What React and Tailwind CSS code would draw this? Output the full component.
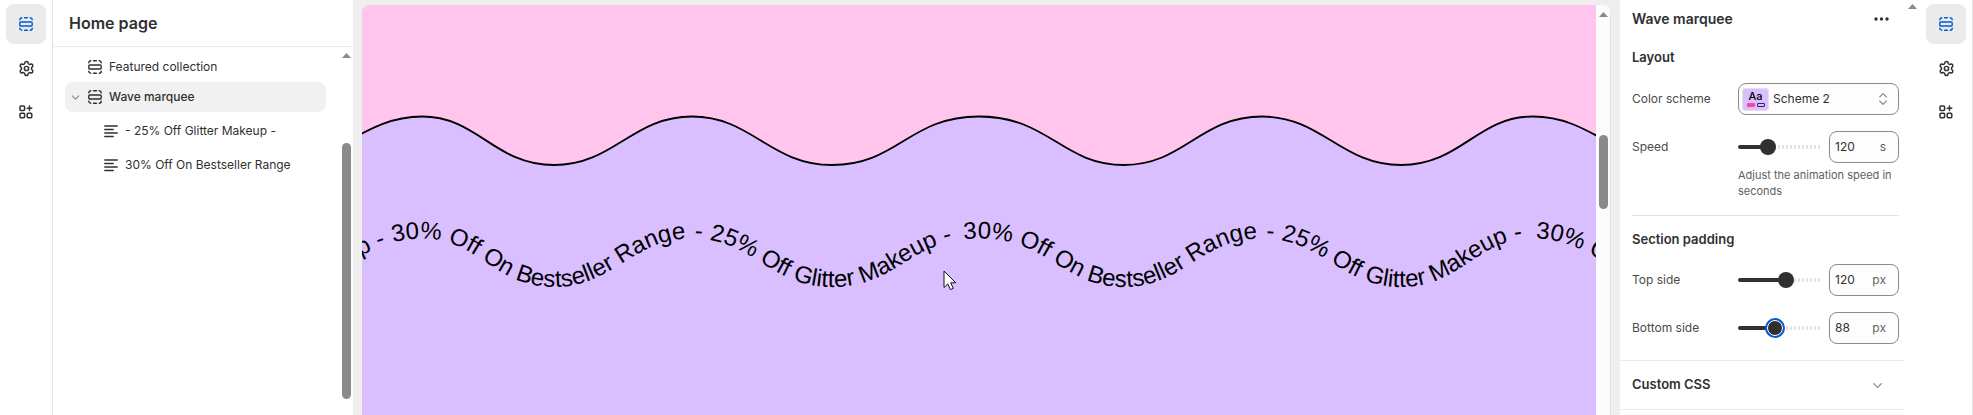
import { ChevronDown, ChevronsUpDown, Settings } from "lucide-react";

function SectionIcon() {
  return (
    <svg viewBox="0 0 14 14" className="size-3.5 shrink-0" fill="none" stroke="currentColor" strokeWidth="1.4" strokeLinecap="round" aria-hidden="true">
      <rect x="0.8" y="5" width="12.4" height="4" rx="1" />
      <path d="M.8 2.8a2 2 0 0 1 2-2M5.6.8h2.8M11.2.8a2 2 0 0 1 2 2M.8 11.2a2 2 0 0 0 2 2M5.6 13.2h2.8M11.2 13.2a2 2 0 0 0 2-2" />
    </svg>
  );
}

function AppsIcon() {
  return (
    <svg viewBox="0 0 14 14" className="size-3.5" fill="none" stroke="currentColor" strokeWidth="1.5" strokeLinecap="round" aria-hidden="true">
      <rect x="1" y="1" width="4.6" height="4.6" rx="1" />
      <rect x="1" y="8.2" width="4.6" height="4.6" rx="1" />
      <rect x="8.2" y="8.2" width="4.6" height="4.6" rx="1" />
      <path d="M10.5 1v4.6M8.2 3.3h4.6" />
    </svg>
  );
}

function TextIcon() {
  return (
    <svg viewBox="0 0 14 14" className="size-3.5 shrink-0" fill="none" stroke="currentColor" strokeWidth="1.4" strokeLinecap="round" aria-hidden="true">
      <path d="M.8 2h12.4M.8 5.500h8.4M.8 9h12.4M.8 12.500h8.4" />
    </svg>
  );
}

function Rail({ label, className }) {
  return (
    <nav aria-label={label} className={className}>
      <button aria-label="Sections" className="flex size-10 items-center justify-center rounded-lg bg-[#ebebeb] text-[#005bd3]">
        <SectionIcon />
      </button>
      <button aria-label="Theme settings" className="flex size-10 items-center justify-center">
        <Settings size={17} strokeWidth={2.1} />
      </button>
      <button aria-label="App embeds" className="flex size-10 items-center justify-center">
        <AppsIcon />
      </button>
    </nav>
  );
}

function UpArrow() {
  return (
    <svg viewBox="0 0 9 5" className="h-[5px] w-[9px]" fill="#8a8a8a" aria-hidden="true">
      <path d="M4.5 0 9 5H0z" />
    </svg>
  );
}

function Sidebar() {
  return (
    <aside className="flex w-[300px] shrink-0 flex-col bg-white">
      <header className="flex h-[47px] shrink-0 items-center border-b border-[#ebebeb] px-4">
        <h1 className="text-base font-semibold">Home page</h1>
      </header>
      <div className="flex min-h-0 flex-1">
        <ul className="flex-1 pt-[5px] pr-4 pl-3">
          <li>
            <a href="#featured" className="flex h-[30px] items-center gap-[7px] pl-[23px]">
              <SectionIcon />
              Featured collection
            </a>
          </li>
          <li>
            <a href="#wave" className="flex h-[30px] items-center gap-[7px] rounded-lg bg-[#f1f1f1] pl-[5px] font-medium">
              <span className="flex w-[11px] justify-center">
                <ChevronDown size={13} className="shrink-0 text-[#8a8a8a]" />
              </span>
              <SectionIcon />
              Wave marquee
            </a>
            <ul className="pt-0.5">
              <li>
                <a href="#glitter" className="flex h-[34px] items-center gap-[7px] pl-[39px]">
                  <TextIcon />
                  - 25% Off Glitter Makeup -
                </a>
              </li>
              <li>
                <a href="#bestseller" className="flex h-[34px] items-center gap-[7px] pl-[39px]">
                  <TextIcon />
                  30% Off On Bestseller Range
                </a>
              </li>
            </ul>
          </li>
        </ul>
        <div className="flex w-[11px] flex-col pt-1.5 pb-4" aria-hidden="true">
          <UpArrow />
          <div className="mt-[85px] w-[9px] flex-1 rounded-full bg-[#8a8a8a]" />
        </div>
      </div>
    </aside>
  );
}

const WAVE =
  "M-372 160C-312 160-287 111.5-227 111.5S-147 160-87 160C-27 160 0 111.5 60 111.5C116 111.5 132 160 192 160C252 160 270 111.5 330 111.5C390 111.5 408 160 470 160C536 160 547 111.5 617 111.5C687 111.5 700 160 762 160C822 160 838 111.5 900 111.5C960 111.5 979 160 1039 160C1099 160 1115 111.5 1171 111.5C1231 111.5 1256 160 1318 160S1405 111.5 1465 111.5";

const GLITTER = "- 25% Off Glitter Makeup -";
const BESTSELLER = "30% Off On Bestseller Range";
const PHRASES = [
  { text: GLITTER, at: 147 },
  { text: BESTSELLER, at: 433 },
  { text: GLITTER, at: 756 },
  { text: BESTSELLER, at: 1046 },
  { text: GLITTER, at: 1369 },
  { text: BESTSELLER, at: 1660 },
];

function Preview() {
  return (
    <main className="flex min-w-0 flex-1 overflow-hidden rounded-t-lg bg-[#fcfcfc]">
      <div className="min-w-0 flex-1 bg-[#d9bfff]">
        <svg viewBox="0 0 1234 410" preserveAspectRatio="xMidYMin slice" className="h-full w-full" role="img" aria-label="Wave marquee preview">
          <defs>
            <path id="marquee-line" d={WAVE} transform="translate(0 122)" />
          </defs>
          <path d={`${WAVE}V-10H-372Z`} fill="#ffc5ed" />
          <path d={WAVE} fill="none" stroke="#000" strokeWidth="1.8" />
          {PHRASES.map(({ text, at }) => (
            <text key={at} className="font-['Liberation_Sans',sans-serif] text-2xl" fill="#000">
              <textPath href="#marquee-line" startOffset={at}>
                {text}
              </textPath>
            </text>
          ))}
          <path d="M582 266v16.500l3.800-3.600 2.600 5.700 2.900-1.200-2.600-5.600h5.100z" fill="#fff" stroke="#111" strokeWidth="1" />
        </svg>
      </div>
      <div className="flex w-[15px] shrink-0 flex-col items-center border-r border-[#e3e3e3] pt-[7px]" aria-hidden="true">
        <UpArrow />
        <div className="mt-[118px] h-[74px] w-[9px] rounded-full bg-[#8a8a8a]" />
      </div>
    </main>
  );
}

function RangeRow({ id, label, unit, value, min, max, help, focused }) {
  const ratio = (value - min) / (max - min);
  const track = {
    backgroundImage:
      "linear-gradient(#303030,#303030),repeating-linear-gradient(90deg,#e3e3e3 0 2px,transparent 2px 4px)",
    backgroundSize: `calc(8px + (100% - 16px) * ${ratio}) 100%, 100% 100%`,
    backgroundRepeat: "no-repeat",
  };
  const thumb = focused
    ? "[&::-webkit-slider-thumb]:border [&::-webkit-slider-thumb]:border-white [&::-webkit-slider-thumb]:shadow-[0_0_0_2px_#005bd3]"
    : "";
  return (
    <div className="grid grid-cols-[106px_minmax(0,1fr)]">
      <label htmlFor={id} className="flex h-8 items-center text-[#4a4a4a]">
        {label}
      </label>
      <div>
        <div className="flex h-8 items-center gap-2">
          <input
            id={id}
            type="range"
            min={min}
            max={max}
            defaultValue={value}
            style={track}
            className={`h-1 min-w-0 flex-1 appearance-none rounded-full outline-none [&::-webkit-slider-thumb]:size-4 [&::-webkit-slider-thumb]:appearance-none [&::-webkit-slider-thumb]:rounded-full [&::-webkit-slider-thumb]:bg-[#303030] ${thumb}`}
          />
          <div className="flex h-8 w-[70px] shrink-0 items-center rounded-lg border border-[#8a8a8a] bg-[#fdfdfd] pr-3 pl-[5px]">
            <input aria-label={`${label} value`} type="text" inputMode="numeric" defaultValue={value} className="w-0 min-w-0 flex-1 bg-transparent outline-none" />
            <span className="text-[#616161]">{unit}</span>
          </div>
        </div>
        {help && <p className="pt-1 text-[11px] leading-4 text-[#616161]">{help}</p>}
      </div>
    </div>
  );
}

function SettingsPanel() {
  return (
    <aside className="flex w-[300px] shrink-0 bg-white">
      <div className="w-[285px] shrink-0">
        <section className="pr-1.5 pl-3">
          <header className="flex h-[38px] items-center justify-between pr-2.5">
            <h2 className="text-sm font-semibold">Wave marquee</h2>
            <button aria-label="More actions">
              <svg viewBox="0 0 15 4" className="h-1 w-[15px]" fill="currentColor" aria-hidden="true">
                <circle cx="2" cy="2" r="1.7" />
                <circle cx="7.500" cy="2" r="1.7" />
                <circle cx="13" cy="2" r="1.7" />
              </svg>
            </button>
          </header>
          <h3 className="flex h-10 items-center text-[13px] font-semibold">Layout</h3>
          <div className="mt-[5px] grid grid-cols-[106px_minmax(0,1fr)]">
            <label htmlFor="scheme" className="flex h-8 items-center text-[#4a4a4a]">
              Color scheme
            </label>
            <div className="flex h-8 items-center rounded-lg border border-[#8a8a8a] bg-[#fdfdfd] pr-[7px] pl-[3px]">
              <div className="flex h-[23px] w-[27px] shrink-0 flex-col items-center gap-px rounded bg-[#d9bfff] pt-0.5 ring-1 ring-[#e3e3e3] ring-inset" aria-hidden="true">
                <span className="text-[11px] leading-3 font-medium text-black">Aa</span>
                <span className="flex gap-0.5">
                  <span className="h-1 w-2 rounded-[1px] bg-[#f9479b]" />
                  <span className="h-1 w-2 rounded-[1px] border border-[#33205c]" />
                </span>
              </div>
              <select id="scheme" className="ml-1 min-w-0 flex-1 appearance-none bg-transparent outline-none">
                <option>Scheme 2</option>
              </select>
              <ChevronsUpDown size={16} strokeWidth={1.7} className="pointer-events-none shrink-0 text-[#8a8a8a]" />
            </div>
          </div>
          <div className="pt-4 pb-4">
            <RangeRow id="speed" label="Speed" unit="s" value={120} min={20} max={320} help="Adjust the animation speed in seconds" />
          </div>
        </section>
        <section className="pr-1.5 pb-4 pl-3">
          <h3 className="flex h-[49px] items-center border-t border-[#e3e3e3] text-[13px] font-semibold">Section padding</h3>
          <div className="grid gap-4">
            <RangeRow id="top-side" label="Top side" unit="px" value={120} min={0} max={200} />
            <RangeRow id="bottom-side" label="Bottom side" unit="px" value={88} min={0} max={200} focused />
          </div>
        </section>
        <button className="flex h-[50px] w-full items-center justify-between border-y border-[#ebebeb] pr-5 pl-3 text-[13px] font-semibold">
          Custom CSS
          <ChevronDown size={15} className="text-[#8a8a8a]" />
        </button>
      </div>
      <div className="flex flex-1 justify-center pt-1" aria-hidden="true">
        <UpArrow />
      </div>
    </aside>
  );
}

export default function App() {
  return (
    <div className="flex h-screen overflow-hidden bg-white font-[Inter,sans-serif] text-xs text-[#303030]">
      <Rail label="Editor" className="flex w-[53px] shrink-0 flex-col items-center gap-1 border-r border-[#e3e3e3] pt-1" />
      <Sidebar />
      <div className="flex min-w-0 flex-1 bg-[#efefef] px-[9px] pt-[5px]">
        <Preview />
      </div>
      <SettingsPanel />
      <Rail label="Panels" className="flex w-[53px] shrink-0 flex-col items-center gap-1 border-r border-[#e3e3e3] pt-1" />
    </div>
  );
}
